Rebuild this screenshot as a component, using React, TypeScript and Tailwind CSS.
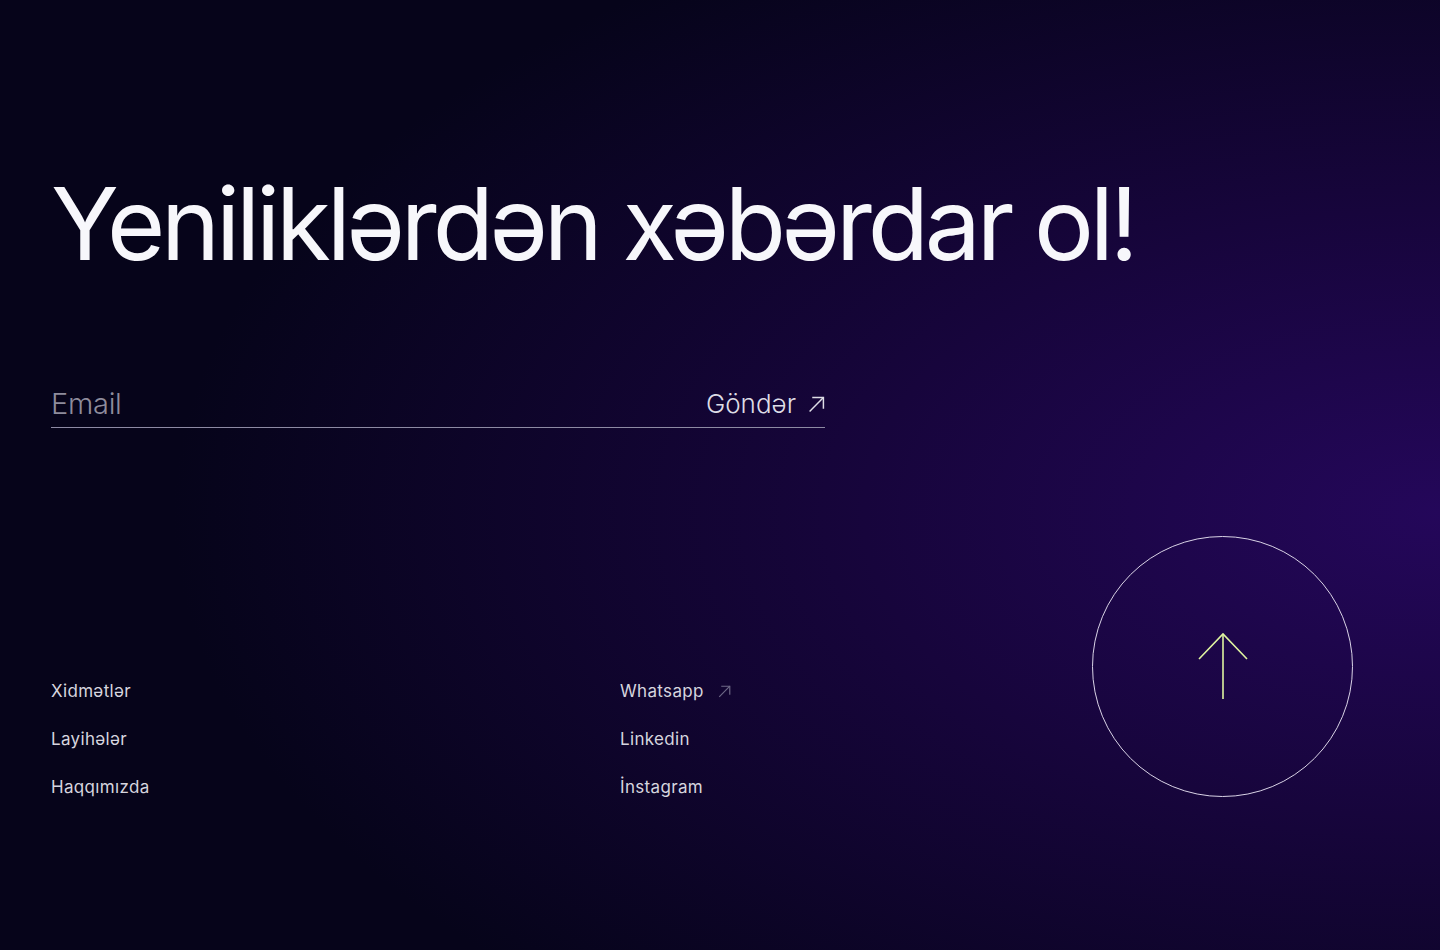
import React from 'react';

const leftLinks = ['Xidmətlər', 'Layihələr', 'Haqqımızda'];
const rightLinks = [
    { label: 'Whatsapp', external: true },
    { label: 'Linkedin', external: false },
    { label: 'İnstagram', external: false },
];

const ArrowUpRight: React.FC<{ className?: string }> = ({ className }) => (
    <svg viewBox="0 0 16 16" fill="none" stroke="currentColor" strokeWidth="1.4" className={className}>
        <path d="M1.5 14.5 14.5 1.5" />
        <path d="M4 1.5h10.5V12" />
    </svg>
);

const App: React.FC = () => {
    return (
        <section
            className="relative h-[950px] w-full overflow-hidden bg-[#06041a] font-['Inter',sans-serif] text-white"
        >
            {/* Background glow */}
            <div className="absolute inset-0 bg-[radial-gradient(ellipse_100%_80%_at_100%_54%,#24075a_0%,#17053c_40%,rgba(6,4,26,0)_88%)]" />

            <div className="relative px-[51px] pt-[174px]">
                <h1 className="text-[100px] font-normal leading-none tracking-[-0.042em] text-[#f7f7fb]">
                    Yeniliklərdən xəbərdar ol!
                </h1>

                <form
                    className="mt-[112px] flex w-[774px] items-end justify-between border-b border-[#8d8aa3] pb-[5px]"
                    onSubmit={(e) => e.preventDefault()}
                >
                    <input
                        type="email"
                        placeholder="Email"
                        className="w-[400px] bg-transparent text-[29px] font-light leading-[36px] tracking-[-0.01em] text-white outline-none placeholder:text-[#8e8c9c]"
                    />
                    <button type="submit" className="flex items-center gap-[12px] pb-[2px] text-[26px] font-light leading-[32px] text-[#dedde6]">
                        Göndər
                        <ArrowUpRight className="h-[17px] w-[17px]" />
                    </button>
                </form>

                <div className="mt-[108px] flex items-start">
                    <div className="mt-[143px] grid w-[1041px] grid-cols-[569px_1fr]">
                        <ul className="flex flex-col gap-[24px]">
                            {leftLinks.map((link) => (
                                <li key={link} className="text-[17px] leading-[24px] tracking-[0.02em] text-[#d6d5df]">
                                    {link}
                                </li>
                            ))}
                        </ul>
                        <ul className="flex flex-col gap-[24px]">
                            {rightLinks.map((link) => (
                                <li key={link.label} className="flex items-center gap-[14px] text-[17px] leading-[24px] tracking-[0.02em] text-[#d6d5df]">
                                    {link.label}
                                    {link.external && <ArrowUpRight className="h-[13px] w-[13px] text-[#6f6a88]" />}
                                </li>
                            ))}
                        </ul>
                    </div>

                    <button className="flex h-[261px] w-[261px] shrink-0 items-center justify-center rounded-full border border-[#d9d3e6]">
                        <svg width="52" height="68" viewBox="0 0 52 68" fill="none" stroke="#dff4a0" strokeWidth="1.6" className="mt-[-2px]">
                            <path d="M2 27 26 2l24 25" />
                            <path d="M26 2v65" />
                        </svg>
                    </button>
                </div>
            </div>
        </section>
    );
};

export default App;
